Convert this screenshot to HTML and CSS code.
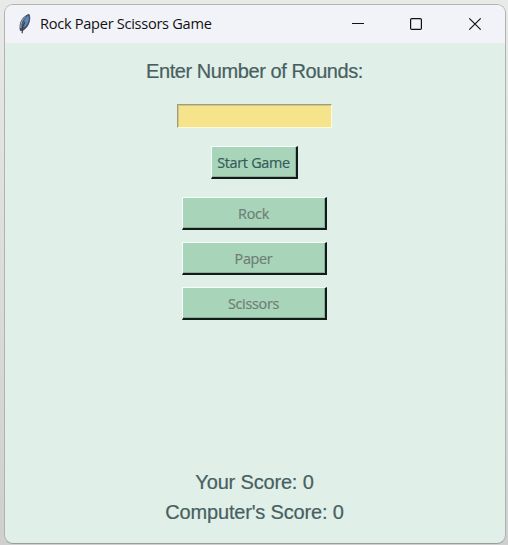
FILE: index.html
```
<!DOCTYPE html>
<html lang="en">
<head>
<meta charset="utf-8">
<title>Rock Paper Scissors Game</title>
<link rel="stylesheet" href="styles.css">
</head>
<body>
<div class="window">
  <header class="titlebar">
    <svg class="feather" width="14" height="22" viewBox="0 0 14 22">
      <path d="M2.3 17.5C1 11 3.5 4 11 1.3C13 6 11 13.5 5.2 17.2Z" fill="#3d5878" stroke="#273746" stroke-width=".8"/>
      <path d="M5.2 14.5C4.8 9 7 5 10.3 2.5C11.8 7 10 12 5.2 14.5Z" fill="#5f88c0"/>
      <path d="M2.8 15C2.6 10 4.3 6 7.5 4" fill="none" stroke="#a9b2b8" stroke-width="1"/>
      <path d="M4.2 20.2L4.6 14L7 9" fill="none" stroke="#4a3c33" stroke-width="1.2"/>
    </svg>
    <h1 class="title">Rock Paper Scissors Game</h1>
    <svg class="controls" width="132" height="14" viewBox="0 0 132 14" fill="none" stroke="#111" stroke-width="1.2">
      <path d="M1 6.5H13"/>
      <rect x="59.6" y="1.6" width="10.8" height="10.8" rx="1.2"/>
      <path d="M118.3 1.3L129.7 12.7M129.7 1.3L118.3 12.7"/>
    </svg>
  </header>
  <main class="game">
    <label class="label prompt" for="rounds">Enter Number of Rounds:</label>
    <input class="entry" id="rounds" type="text">
    <button class="btn start">Start Game</button>
    <div class="choices">
      <button class="btn choice" disabled>Rock</button>
      <button class="btn choice" disabled>Paper</button>
      <button class="btn choice" disabled>Scissors</button>
    </div>
    <div class="scores">
      <p class="label">Your Score: 0</p>
      <p class="label">Computer's Score: 0</p>
    </div>
  </main>
</div>
</body>
</html>
```
FILE: styles.css
```
* { box-sizing: border-box; }
body {
  margin: 0;
  height: 545px;
  padding: 4px 2px 1px 4px;
  overflow: hidden;
  background: linear-gradient(#e9e9e7, #cfcfcf);
}
.window {
  height: 540px;
  border: 1px solid #b1b2b3;
  border-bottom-color: #999c9b;
  border-radius: 9px;
  overflow: hidden;
  background: #e0efe8;
}
.titlebar {
  display: flex;
  align-items: center;
  height: 38px;
  padding: 0 22px 0 13px;
  background: #f1f3f8;
}
.feather { margin-top: -1px; }
.title {
  margin: 0 auto 2px 8px;
  font: 400 14.6px/20px "Open Sans", "Noto Sans", sans-serif;
  letter-spacing: -0.29px;
  color: #111;
  white-space: nowrap;
}
.game {
  display: flex;
  flex-direction: column;
  align-items: center;
  height: 500px;
  padding: 16px 2px 0 0;
}
.label {
  margin: 0;
  padding-left: 1px;
  font: 20px/24px "Liberation Sans", Arial, sans-serif;
  letter-spacing: -0.17px;
  color: #47605f;
  -webkit-text-stroke: 0.2px #47605f;
  white-space: nowrap;
}
.prompt { letter-spacing: -0.43px; }
.entry {
  width: 155px;
  height: 24px;
  margin: 21px 0 18px;
  padding: 0 3px;
  border: 1px solid;
  border-color: #a39c78 #fffbd9 #fffbd9 #a39c78;
  box-shadow: inset 1px 1px #d3c583;
  outline: none;
  background: #f6e48d;
}
.btn {
  height: 33px;
  padding: 0;
  border: 1px solid;
  border-width: 1px 2px 2px 1px;
  border-color: #f5fff9 #101c17 #101c17 #f5fff9;
  box-shadow: inset -1px -1px #8cae9b;
  background: #a8d5ba;
  font: 14.4px/20px "Open Sans", "Noto Sans", sans-serif;
  letter-spacing: -0.3px;
  color: #355b5b;
  -webkit-text-stroke: 0.2px;
}
.start {
  width: 87px;
  padding-top: 1px;
}
.choices {
  display: grid;
  gap: 12px;
  margin-top: 18px;
}
.choice {
  width: 145px;
  padding-top: 1px;
  color: #6f7d75;
}
.scores {
  display: grid;
  justify-items: center;
  gap: 6px;
  margin-top: 150px;
}
```
